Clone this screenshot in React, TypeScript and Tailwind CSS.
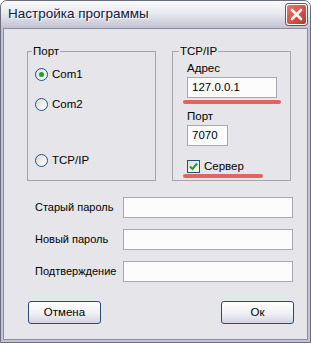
import React from "react";

const font = { fontFamily: '"Liberation Sans", Arial, sans-serif' };

function Radio({ checked, label, className = "" }: { checked?: boolean; label: string; className?: string }) {
  return (
    <div className={"flex items-center " + className}>
      <div className="w-[13px] h-[13px] rounded-full border border-[#1c5180] bg-gradient-to-br from-[#dcdcd8] to-[#ffffff] flex items-center justify-center">
        {checked && <div className="w-[5px] h-[5px] rounded-full bg-[#21a121]" />}
      </div>
      <span className="ml-[4px] text-[11.5px] leading-[14px] text-black">{label}</span>
    </div>
  );
}

function Input({ value = "", className = "" }: { value?: string; className?: string }) {
  return (
    <div className={"h-[21px] border border-[#a8a8b4] bg-[#fcfcfc] flex items-center px-[4px] text-[11.5px] text-black " + className}>
      {value}
    </div>
  );
}

function Button({ label, className = "" }: { label: string; className?: string }) {
  return (
    <div className={"w-[73px] h-[23px] rounded-[3px] border border-[#2c4a78] bg-gradient-to-b from-[#ffffff] via-[#f2f2f6] to-[#d4d4e2] flex items-center justify-center text-[11.5px] text-black " + className}>
      {label}
    </div>
  );
}

export default function App() {
  return (
    <div style={font} className="w-[311px] h-[343px] bg-white">
      <div className="w-[311px] h-[343px] rounded-t-[7px] border border-[#6c6c80] bg-[#c4c4d2] flex flex-col overflow-hidden">
        {/* Title bar */}
        <div className="h-[27px] shrink-0 bg-gradient-to-b from-[#fbfbfd] via-[#e6e6ee] to-[#c2c2d2] flex items-center pl-[7px] pr-[3px] justify-between">
          <span className="text-[13.5px] text-[#101838] [text-shadow:1px_1px_0_#ffffff]">Настройка программы</span>
          <div className="w-[21px] h-[21px] rounded-[3px] border border-white bg-gradient-to-br from-[#e67a6a] via-[#d8544a] to-[#b83a30] flex items-center justify-center shadow-[0_0_0_1px_#a04040]">
            <svg width="13" height="13" viewBox="0 0 13 13">
              <path d="M2 2 L11 11 M11 2 L2 11" stroke="white" strokeWidth="2.6" strokeLinecap="round" />
            </svg>
          </div>
        </div>
        {/* Client */}
        <div className="flex-1 mx-[2px] mb-[2px] border border-[#8c8ca0] bg-[#e6e6ea] flex flex-col">
          <div className="flex pt-[22px] pl-[23px]">
            {/* Group Порт */}
            <div className="relative w-[129px] h-[130px] border border-[#a4a4b0] pl-[7px]">
              <span className="absolute -top-[8px] left-[4px] px-[1px] bg-[#e6e6ea] text-[11.5px] leading-[14px] text-black">Порт</span>
              <Radio checked label="Com1" className="mt-[15px]" />
              <Radio label="Com2" className="mt-[16px]" />
              <Radio label="TCP/IP" className="mt-[42px]" />
            </div>
            {/* Group TCP/IP */}
            <div className="relative ml-[16px] w-[119px] h-[130px] border border-[#a4a4b0] pl-[14px]">
              <span className="absolute -top-[8px] left-[6px] px-[1px] bg-[#e6e6ea] text-[11.5px] leading-[14px] text-black">TCP/IP</span>
              <div className="mt-[9px] text-[11.5px] leading-[14px] text-black">Адрес</div>
              <Input value="127.0.0.1" className="mt-[2px] w-[90px]" />
              <div className="mt-[2px] -ml-[4px] w-[98px] h-[4px] rounded-full bg-[#e06464]" />
              <div className="mt-[5px] text-[11.5px] leading-[14px] text-black">Порт</div>
              <Input value="7070" className="mt-[2px] w-[41px]" />
              <div className="mt-[13px] flex items-center">
                <div className="w-[13px] h-[13px] border border-[#1c5180] bg-gradient-to-br from-[#dcdcd8] to-[#ffffff] flex items-center justify-center">
                  <svg width="9" height="9" viewBox="0 0 9 9">
                    <path d="M1 4.5 L3.5 7 L8 1.5" stroke="#21a121" strokeWidth="2" fill="none" />
                  </svg>
                </div>
                <span className="ml-[4px] text-[11.5px] leading-[14px] text-black">Сервер</span>
              </div>
              <div className="mt-[1px] -ml-[4px] w-[80px] h-[4px] rounded-full bg-[#e06464]" />
            </div>
          </div>
          {/* Password fields */}
          <div className="flex flex-col pl-[31px] mt-[16px] gap-[11px]">
            <div className="flex items-center">
              <span className="w-[88px] text-[11px] text-black">Старый пароль</span>
              <Input className="w-[170px]" />
            </div>
            <div className="flex items-center">
              <span className="w-[88px] text-[11px] text-black">Новый пароль</span>
              <Input className="w-[170px]" />
            </div>
            <div className="flex items-center">
              <span className="w-[88px] text-[11px] text-black">Подтверждение</span>
              <Input className="w-[170px]" />
            </div>
          </div>
          <div className="flex justify-between pl-[24px] pr-[13px] mt-[19px]">
            <Button label="Отмена" />
            <Button label="Ок" />
          </div>
        </div>
      </div>
    </div>
  );
}
